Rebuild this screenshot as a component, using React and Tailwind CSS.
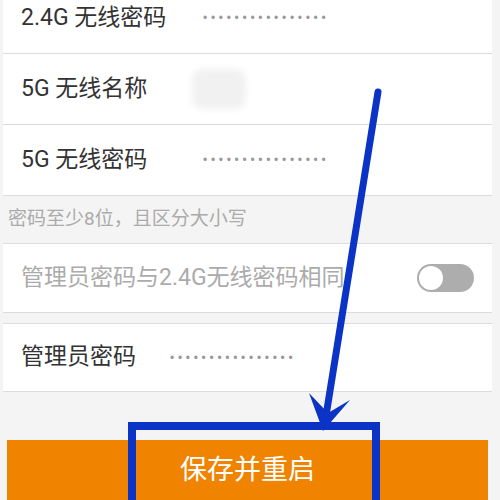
export default function App() {
  const font = { fontFamily: "Roboto, 'Noto Sans CJK SC', 'Noto Sans', sans-serif" };
  const dots = "••••••••••••••••";
  const dotFont = { fontFamily: "'Liberation Sans', sans-serif" };
  return (
    <div className="relative w-[500px] h-[500px] overflow-hidden bg-[#f4f4f4]" style={font}>
      <div className="flex flex-col">
        <div className="mx-[3px] w-[489px] bg-white -mt-[17px]">
          <div className="h-[71px] border-b border-[#dcdcdc] flex items-center pl-[18px]">
            <span className="w-[182px] text-[23px] text-[#333]">2.4G 无线密码</span>
            <span className="text-[12px] tracking-[3.7px] text-[#999]" style={dotFont}>{dots}</span>
          </div>
          <div className="h-[71px] border-b border-[#dcdcdc] flex items-center pl-[18px]">
            <span className="w-[171px] text-[23px] text-[#333]">5G 无线名称</span>
            <span className="w-[54px] h-[40px] bg-[#f1f1f1] rounded-[10px] blur-[3px]"></span>
          </div>
          <div className="h-[71px] border-b border-[#dcdcdc] flex items-center pl-[18px]">
            <span className="w-[182px] text-[23px] text-[#333]">5G 无线密码</span>
            <span className="text-[12px] tracking-[3.7px] text-[#999]" style={dotFont}>{dots}</span>
          </div>
        </div>
        <div className="h-[47px] flex items-center pl-[8px] text-[19px] text-[#ababab]">密码至少8位，且区分大小写</div>
        <div className="mx-[3px] w-[489px] bg-white h-[70px] border-y border-[#dcdcdc] flex items-center pl-[18px] pr-[18px] justify-between">
          <span className="text-[23px] text-[#ababab]">管理员密码与2.4G无线密码相同</span>
          <div className="w-[57px] h-[28px] rounded-full bg-[#adadad] flex items-center pl-[2px]">
            <div className="w-[24px] h-[24px] rounded-full bg-white"></div>
          </div>
        </div>
        <div className="h-[10px]"></div>
        <div className="mx-[3px] w-[489px] bg-white h-[69px] border-y border-[#dcdcdc] flex items-center pl-[18px]">
          <span className="w-[149px] text-[23px] text-[#333]">管理员密码</span>
          <span className="text-[12px] tracking-[3.7px] text-[#999]" style={dotFont}>{dots}</span>
        </div>
        <div className="h-[48px]"></div>
        <div className="mx-[7px] w-[481px] h-[60px] bg-[#f08300] flex items-center justify-center text-white text-[27px]">保存并重启</div>
      </div>
      <svg className="absolute inset-0 pointer-events-none" width="500" height="500" viewBox="0 0 500 500">
        <line x1="378" y1="92" x2="325" y2="422" stroke="#0b33c6" strokeWidth="7" strokeLinecap="round" />
        <polygon points="309,393 323,431 350,400 328,413" fill="#0b33c6" />
        <rect x="132" y="426" width="244" height="100" fill="none" stroke="#0b33c6" strokeWidth="8" />
      </svg>
    </div>
  );
}
